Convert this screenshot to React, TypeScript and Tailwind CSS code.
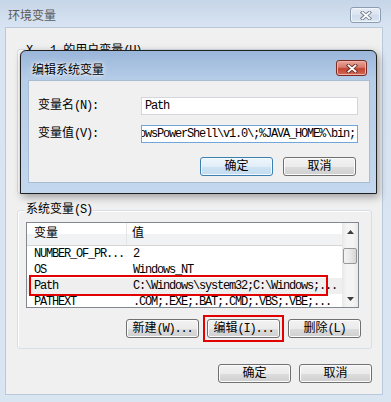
import type { ReactNode } from 'react'
import clsx from 'clsx'

// ascii part of a label: squeeze mono to ~6px per char like SimSun
const A = ({ children }: { children: ReactNode }) => <span className="tracking-[-1.2px]">{children}</span>

function Btn({ children, def = false, className }: { children: ReactNode; def?: boolean; className?: string }) {
  return (
    <div
      className={clsx(
        'flex h-[19px] w-[73px] items-center justify-center rounded-[3px] border text-[12px] leading-none text-black',
        def
          ? 'border-[#3c7fb1] bg-[linear-gradient(#eef6fc_0%,#e1eef8_50%,#cfe4f4_51%,#c3dcef_100%)] shadow-[inset_0_0_0_1px_#f4f9fd]'
          : 'border-[#707070] bg-[linear-gradient(#f2f2f2_0%,#ebebeb_50%,#dddddd_51%,#cfcfcf_100%)] shadow-[inset_0_0_0_1px_#fcfcfc]',
        className,
      )}
    >
      {children}
    </div>
  )
}

function CloseBtn({ active = false }: { active?: boolean }) {
  return (
    <div
      className={clsx(
        'flex h-[16px] w-[31px] items-center justify-center rounded-[3px] border',
        active
          ? 'border-[#7a2a22] bg-[linear-gradient(#e8a89c_0%,#d67a6b_45%,#c2432f_55%,#d06a58_100%)] shadow-[inset_0_0_0_1px_#eeb3a8]'
          : 'border-[#8c9cb1] bg-[linear-gradient(#e6edf6_0%,#dbe5f1_45%,#cfdcec_55%,#dbe6f2_100%)] shadow-[inset_0_0_0_1px_#f1f5fa]',
      )}
    >
      <svg width="12" height="9" viewBox="0 0 12 9">
        <path d="M2.5 1.5 L9.5 7.5 M9.5 1.5 L2.5 7.5" stroke={active ? '#6b2a22' : '#6f7b8a'} strokeWidth="3.6" strokeLinecap="square" />
        <path d="M2.5 1.5 L9.5 7.5 M9.5 1.5 L2.5 7.5" stroke="#ffffff" strokeWidth="1.8" strokeLinecap="square" />
      </svg>
    </div>
  )
}

const rows = [
  { name: 'NUMBER_OF_PR...', value: '2' },
  { name: 'OS', value: 'Windows_NT' },
  { name: 'Path', value: 'C:\\Windows\\system32;C:\\Windows;...', selected: true },
  { name: 'PATHEXT', value: '.COM;.EXE;.BAT;.CMD;.VBS;.VBE;...' },
]

function VarList() {
  return (
    <div className="flex h-[86px] w-[333px] border border-[#828790] bg-white">
      <div className="relative flex-1 overflow-hidden">
        <div className="flex h-[23px] items-center border-b border-[#d5d5d5] bg-[linear-gradient(#ffffff_0%,#ffffff_50%,#f1f2f4_51%,#f1f2f4_100%)]">
          <div className="flex h-full w-[100px] items-center border-r border-[#e3e5e8] pl-[7px]">变量</div>
          <div className="pl-[5px]">值</div>
        </div>
        {rows.map((r) => (
          <div key={r.name} className={clsx('flex h-[16px] items-center whitespace-nowrap tracking-[-1.2px]', r.selected && 'bg-[#efefef]')}>
            <div className="w-[100px] pl-[7px]">{r.name}</div>
            <div className="pl-[6px]">{r.value}</div>
          </div>
        ))}
        {/* red highlight drawn over the Path row */}
        <div className="absolute left-[2px] top-[52px] h-[21px] w-[299px] border-2 border-[#e20000]" />
      </div>
      <div className="flex w-[16px] flex-col bg-[linear-gradient(90deg,#e8e8e8,#f4f4f4_30%,#f4f4f4_70%,#e8e8e8)]">
        <div className="flex h-[17px] items-center justify-center">
          <svg width="7" height="4" viewBox="0 0 7 4"><path d="M0 4 L3.5 0 L7 4 Z" fill="#3c3c3c" /></svg>
        </div>
        <div className="mx-[1px] mt-[8px] h-[16px] rounded-[2px] border border-[#979797] bg-[linear-gradient(90deg,#f3f3f3,#e8e8e8_50%,#d6d6d6)]" />
        <div className="flex-1" />
        <div className="flex h-[17px] items-center justify-center">
          <svg width="7" height="4" viewBox="0 0 7 4"><path d="M0 0 L3.5 4 L7 0 Z" fill="#3c3c3c" /></svg>
        </div>
      </div>
    </div>
  )
}

function EditDialog() {
  return (
    <div className="absolute left-[20px] top-[50px] h-[144px] w-[357px] rounded-t-[6px] border border-[#202020] bg-[linear-gradient(#9ab6d9_0px,#b6cde8_29px,#c3d7ee_100%)] shadow-[2px_3px_8px_rgba(0,0,0,0.35)]">
      <div className="flex h-[29px] items-start justify-between pl-[11px] pr-[9px]">
        <span className="mt-[10px] font-['Noto_Sans_CJK_SC',sans-serif] text-[12px] leading-[16px] text-black [text-shadow:0_0_6px_#fff,0_0_3px_#fff]">
          编辑系统变量
        </span>
        <div className="mt-[9px]">
          <CloseBtn active />
        </div>
      </div>
      <div className="ml-[7px] h-[103px] w-[342px] border border-[#a8bcd4] bg-[#f0f0f0] pt-[16px]">
        <div className="flex h-[18px] items-center">
          <div className="w-[112px] pl-[9px]">
            变量名<A>(N):</A>
          </div>
          <div className="flex h-[18px] w-[217px] items-center border border-[#d3d6dc] bg-white pl-[3px] tracking-[-1.2px]">Path</div>
        </div>
        <div className="mt-[10px] flex h-[18px] items-center">
          <div className="w-[112px] pl-[9px]">
            变量值<A>(V):</A>
          </div>
          <div className="flex h-[18px] w-[217px] items-center justify-end overflow-hidden whitespace-nowrap border border-[#6fa6dc] bg-white pr-[2px] tracking-[-1.2px]">
            %SystemRoot%\System32\WindowsPowerShell\v1.0\;%JAVA_HOME%\bin;
          </div>
        </div>
        <div className="mt-[14px] flex justify-end gap-[10px] pr-[13px]">
          <Btn def className="h-[18px] w-[72px]">确定</Btn>
          <Btn className="h-[18px] w-[71px]">取消</Btn>
        </div>
      </div>
    </div>
  )
}

export default function App() {
  return (
    <div className="relative h-[402px] w-[391px] overflow-hidden bg-[linear-gradient(#c6d5e8_0px,#d8e4f2_27px,#dae5f2_100%)] font-['Liberation_Mono','Noto_Sans_CJK_SC',monospace] text-[12px] leading-[16px] text-black">
      <div className="flex h-[27px] items-start justify-between pl-[8px] pr-[10px]">
        <span className="mt-[7px] font-['Noto_Sans_CJK_SC',sans-serif] text-[12px] leading-[16px] text-[#5a5a5a]">环境变量</span>
        <div className="mt-[7px]">
          <CloseBtn />
        </div>
      </div>
      <div className="ml-[5px] h-[368px] w-[378px] border border-[#b9c8da] bg-[#f0f0f0] pl-[11px] pr-[10px] pt-[21px]">
        <div className="relative h-[145px] rounded-[3px] border border-[#d5dfe5] shadow-[inset_1px_1px_0_#fff]">
          <span className="absolute -top-[7px] left-[7px] bg-[#f0f0f0] px-[1px]">
            <A>X</A>
            <span className="inline-block w-[18px]" />
            <A>1</A> 的用户变量<A>(U)</A>
          </span>
        </div>
        <div className="relative mt-[16px] h-[139px] rounded-[3px] border border-[#d5dfe5] pl-[8px] pr-[10px] pt-[11px] shadow-[inset_1px_1px_0_#fff]">
          <span className="absolute -top-[9px] left-[7px] bg-[#f0f0f0] px-[1px]">
            系统变量<A>(S)</A>
          </span>
          <VarList />
          <div className="mt-[11px] flex justify-end gap-[8px]">
            <Btn className="w-[72px]">
              新建<A>(W)...</A>
            </Btn>
            <div className="-m-[4px] border-2 border-[#e20000] p-[2px]">
              <Btn>
                编辑<A>(I)...</A>
              </Btn>
            </div>
            <Btn>
              删除<A>(L)</A>
            </Btn>
          </div>
        </div>
        <div className="mt-[15px] flex justify-end gap-[8px]">
          <Btn>确定</Btn>
          <Btn>取消</Btn>
        </div>
      </div>
      <EditDialog />
    </div>
  )
}
